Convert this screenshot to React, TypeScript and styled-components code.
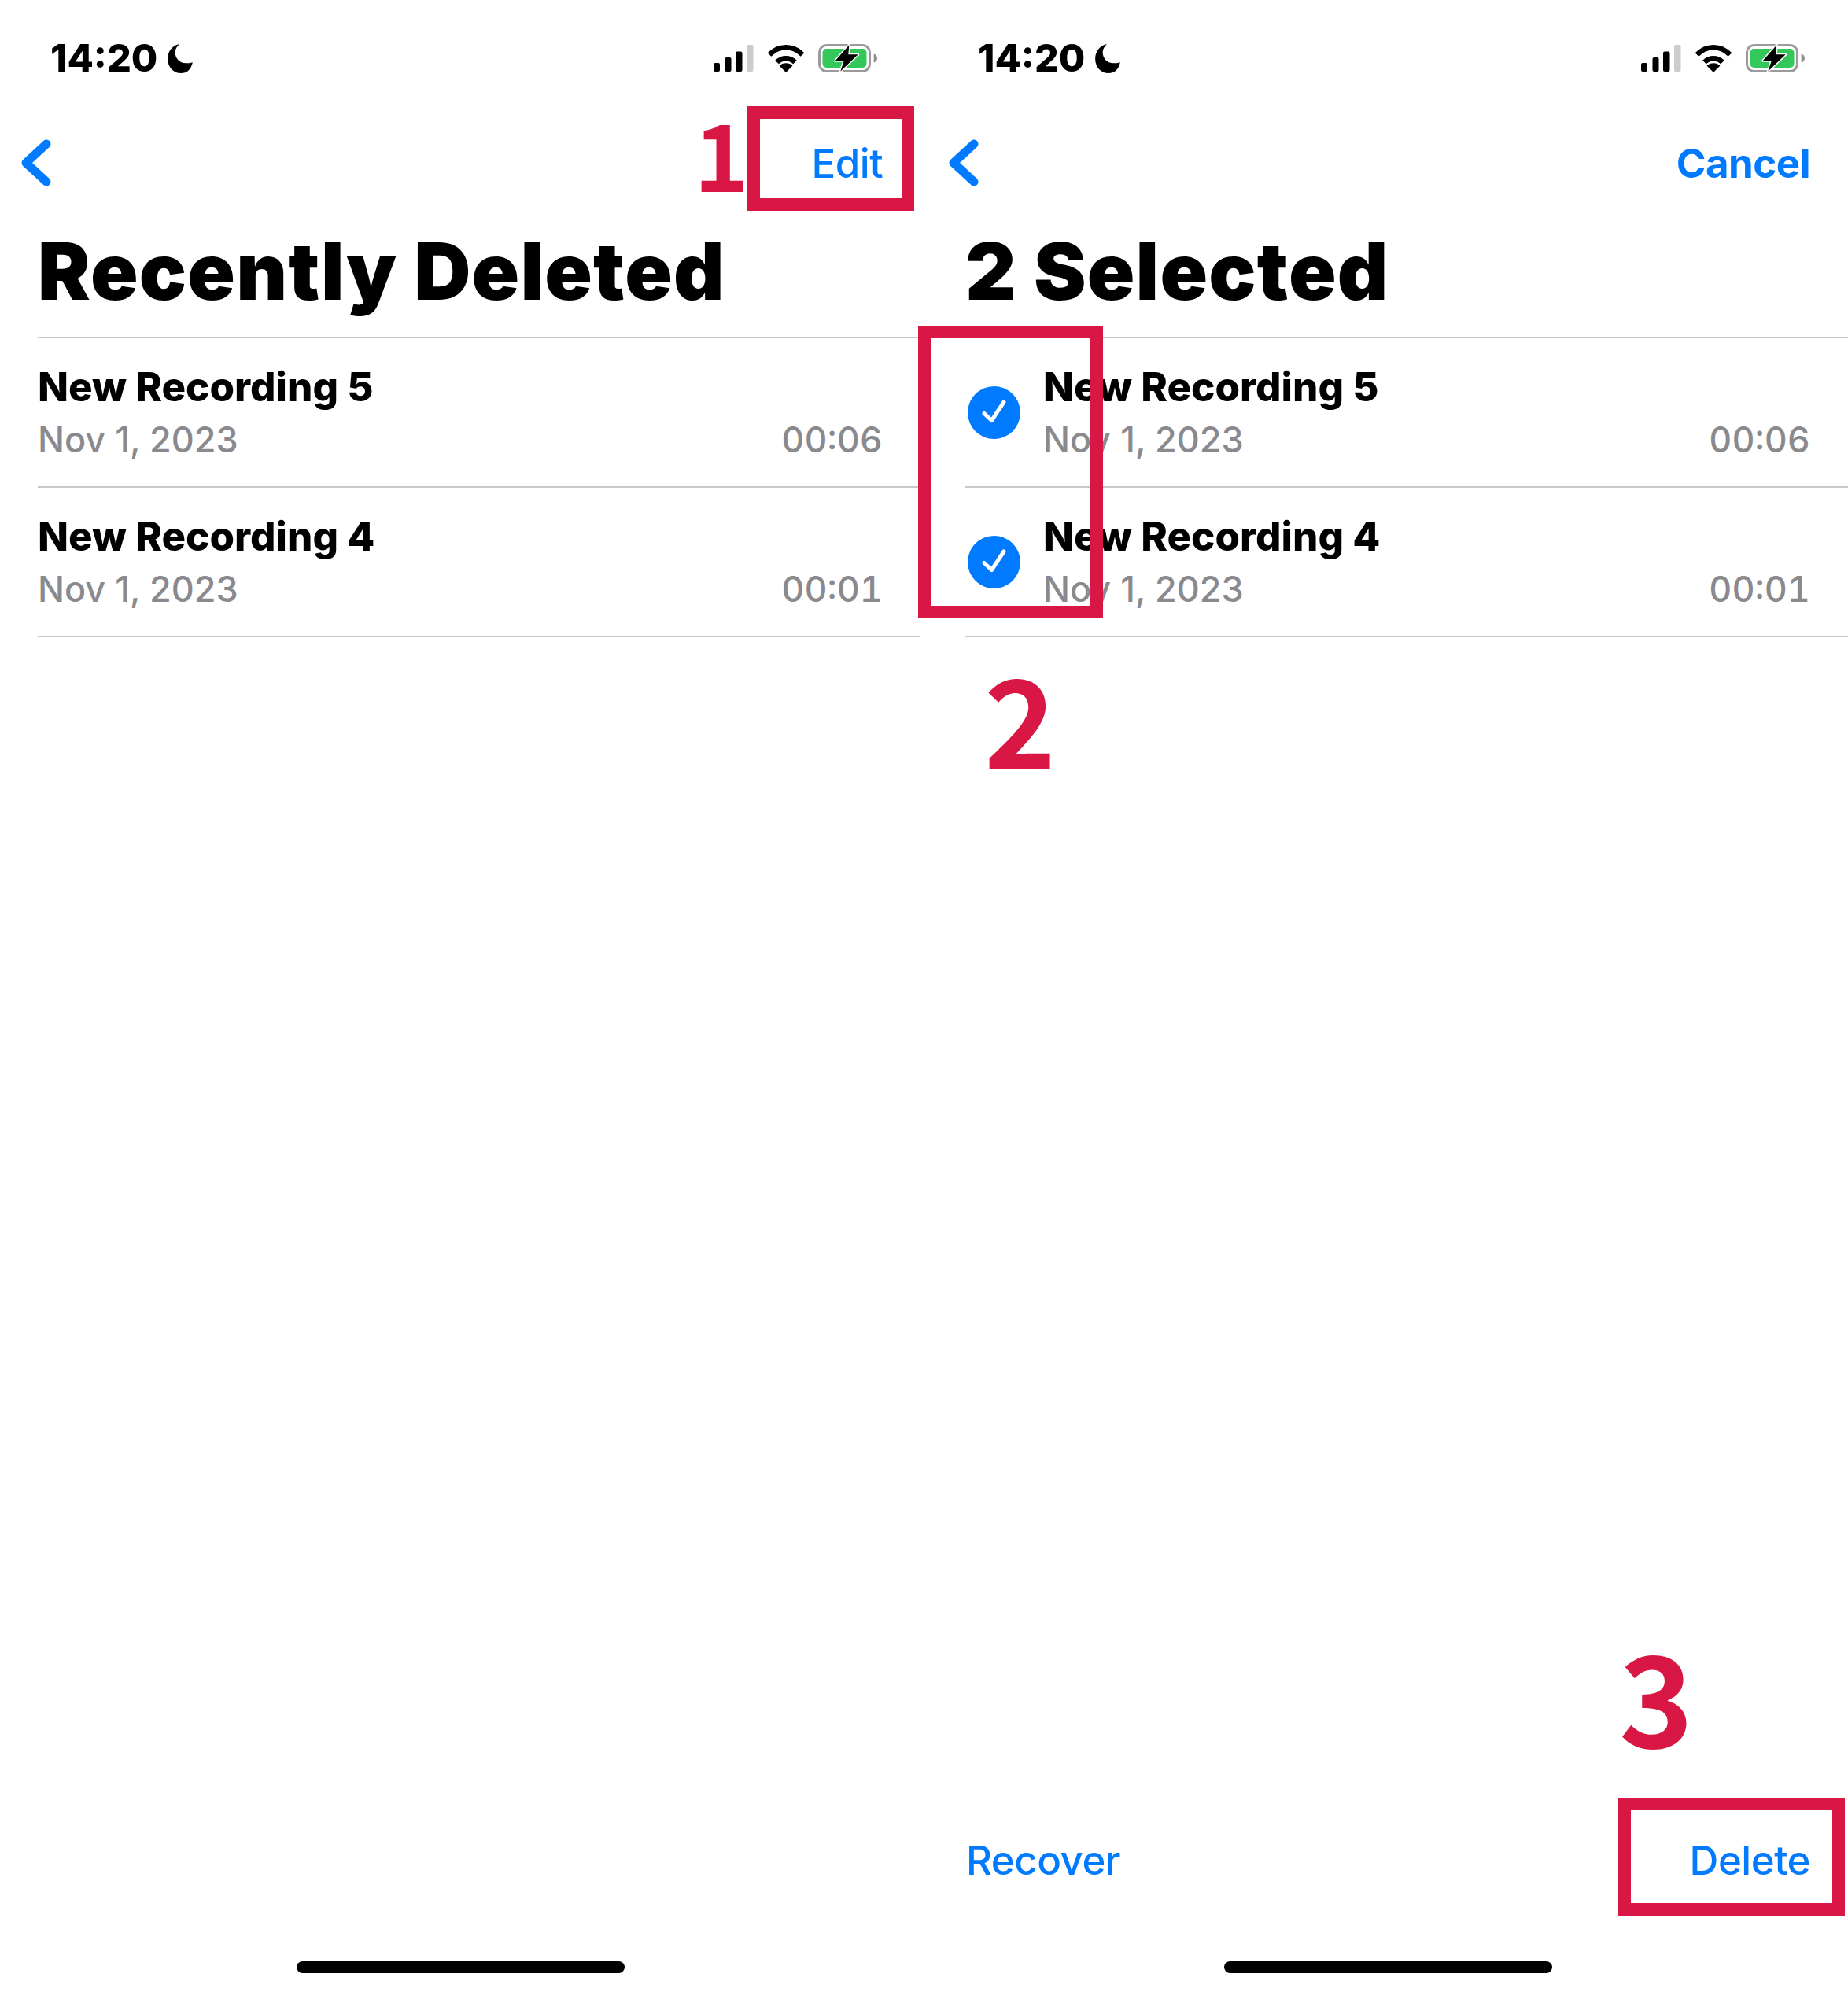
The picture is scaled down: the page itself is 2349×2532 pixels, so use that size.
import React from "react";
import styled, { createGlobalStyle } from "styled-components";

const Global = createGlobalStyle`
  html, body { margin: 0; padding: 0; background: #fff; }
  body { font-family: Inter, "Liberation Sans", sans-serif; color: #000; }
`;

const Page = styled.div`
  position: relative;
  display: flex;
  gap: 9px;
  width: 2349px;
  height: 2532px;
  overflow: hidden;
  background: #fff;
`;

const Screen = styled.section`
  flex: 0 0 1170px;
  display: flex;
  flex-direction: column;
  height: 2532px;
`;

const StatusBar = styled.div`
  flex: 0 0 148px;
  display: flex;
  align-items: center;
  justify-content: space-between;
  padding: 0 55px 0 64px;
  box-sizing: border-box;
`;

const TimeGroup = styled.div`
  display: flex;
  align-items: center;
  gap: 11px;
`;

const Time = styled.span`
  font-size: 48.5px;
  font-weight: 800;
  line-height: 1;
`;

const StatusIcons = styled.div`
  display: flex;
  align-items: center;
  gap: 17px;
`;

const NavBar = styled.div`
  flex: 0 0 118px;
  display: flex;
  align-items: center;
  justify-content: space-between;
  padding: 0 48px 0 27px;
  box-sizing: border-box;
`;

const NavAction = styled.span<{ $bold?: boolean }>`
  font-size: 51px;
  line-height: 1;
  letter-spacing: -0.5px;
  font-weight: ${(p) => (p.$bold ? 700 : 500)};
  color: #007aff;
`;

const Title = styled.h1`
  margin: 0 0 4px;
  height: 158px;
  line-height: 158px;
  padding-left: 48px;
  font-size: 100px;
  font-weight: 900;
  letter-spacing: 1.2px;
  white-space: nowrap;
`;

const List = styled.div`
  margin-left: 48px;
  border-top: 2px solid #c8c8ca;
`;

const Row = styled.div`
  box-sizing: border-box;
  height: 190px;
  padding-right: 48px;
  border-bottom: 2px solid #c8c8ca;
  display: flex;
  align-items: center;
  gap: 29px;
`;

const CheckMark = styled.div`
  flex: 0 0 67px;
  height: 67px;
  margin-left: 3px;
  border-radius: 50%;
  background: #007aff;
  display: flex;
  align-items: center;
  justify-content: center;
`;

const RowBody = styled.div`
  flex: 1;
  min-width: 0;
  margin-top: 3px;
`;

const RowTitle = styled.div`
  font-size: 51px;
  font-weight: 800;
  line-height: 60px;
`;

const RowMeta = styled.div`
  margin-top: 7px;
  display: flex;
  justify-content: space-between;
  font-size: 45px;
  line-height: 60px;
  font-weight: 500;
  color: #8a8a8e;
`;

const Duration = styled.span`
  font-variant-numeric: tabular-nums;
`;

const Toolbar = styled.div`
  margin-top: auto;
  height: 140px;
  padding: 0 48px 0 49px;
  box-sizing: border-box;
  display: flex;
  align-items: center;
  justify-content: space-between;
`;

const HomeZone = styled.div<{ $pushed?: boolean }>`
  flex: 0 0 98px;
  margin-top: ${(p) => (p.$pushed ? "auto" : "0")};
  box-sizing: border-box;
  padding-top: 59px;
  display: flex;
  justify-content: center;
`;

const HomeBar = styled.div`
  width: 417px;
  height: 15px;
  border-radius: 8px;
  background: #000;
`;

const Highlight = styled.div<{ $x: number; $y: number; $w: number; $h: number }>`
  position: absolute;
  left: ${(p) => p.$x}px;
  top: ${(p) => p.$y}px;
  width: ${(p) => p.$w}px;
  height: ${(p) => p.$h}px;
  box-sizing: border-box;
  border: 16px solid #d81745;
`;

const StepNumber = styled.span<{ $x: number; $y: number; $size: number }>`
  position: absolute;
  left: ${(p) => p.$x}px;
  top: ${(p) => p.$y}px;
  font-family: "Noto Sans CJK JP", "Noto Sans", sans-serif;
  font-weight: 700;
  font-size: ${(p) => p.$size}px;
  line-height: 1;
  color: #d81745;
`;

const Moon = () => (
  <svg width="36" height="37" viewBox="0 0 30 35">
    <path d="M14 0C5 2 0 9 0 18c0 10 7 17 16 17 7 0 12-4 14-13-3 1-5 1-8 1-8 0-13-6-13-13 0-4 2-7 5-10Z" fill="#000" />
  </svg>
);

const Signal = () => (
  <svg width="51" height="34" viewBox="0 0 51 34">
    <rect x="0" y="23" width="8" height="11" rx="2" fill="#000" />
    <rect x="14.5" y="16" width="8" height="18" rx="2" fill="#000" />
    <rect x="28" y="8.5" width="8.5" height="25.5" rx="2" fill="#000" />
    <rect x="42" y="0" width="8.5" height="34" rx="2" fill="#ccc" />
  </svg>
);

const Wifi = () => (
  <svg width="48" height="37" viewBox="0 0 48 37">
    <path d="M3 13.5C15 1 33 1 45 13.5" fill="none" stroke="#000" strokeWidth="6.5" />
    <path d="M12.5 23C19 16.5 29 16.5 35.5 23" fill="none" stroke="#000" strokeWidth="6.5" />
    <path d="M24 36 15.5 27.5C20 23 28 23 32.5 27.5Z" fill="#000" />
  </svg>
);

const Battery = () => (
  <svg width="75" height="37" viewBox="0 0 75 37">
    <rect x="1.5" y="1.5" width="64" height="33" rx="9" fill="none" stroke="#9b9b9b" strokeWidth="3" />
    <rect x="5.5" y="6" width="56" height="24" rx="5" fill="#34c759" />
    <path d="M70.7 12.5c2.5.6 4.3 3 4.3 5.500s-1.800 5-4.300 5.500Z" fill="#8e8e8e" />
    <path
      d="M39.300 1.300 21.700 21.300H32.700L28.300 34.700 50.700 13.300H38.300Z"
      fill="#000"
      stroke="#fff"
      strokeWidth="3"
      strokeLinejoin="round"
      paintOrder="stroke"
    />
  </svg>
);

const Status = () => (
  <StatusBar>
    <TimeGroup>
      <Time>14:20</Time>
      <Moon />
    </TimeGroup>
    <StatusIcons>
      <Signal />
      <Wifi />
      <Battery />
    </StatusIcons>
  </StatusBar>
);

const Back = () => (
  <svg width="38" height="60" viewBox="0 0 38 60">
    <path d="M32 6 6 30l26 24" fill="none" stroke="#007aff" strokeWidth="11" strokeLinecap="round" strokeLinejoin="round" />
  </svg>
);

const Tick = () => (
  <svg width="34" height="34" viewBox="0 0 34 34">
    <path d="M4 18.500 13.500 27.500 29 4" fill="none" stroke="#fff" strokeWidth="5" strokeLinecap="round" strokeLinejoin="round" />
  </svg>
);

const recordings = [
  { name: "New Recording 5", date: "Nov 1, 2023", length: "00:06" },
  { name: "New Recording 4", date: "Nov 1, 2023", length: "00:01" },
];

const Recordings = ({ selecting }: { selecting?: boolean }) => (
  <List>
    {recordings.map((r) => (
      <Row key={r.name}>
        {selecting && (
          <CheckMark>
            <Tick />
          </CheckMark>
        )}
        <RowBody>
          <RowTitle>{r.name}</RowTitle>
          <RowMeta>
            <span>{r.date}</span>
            <Duration>{r.length}</Duration>
          </RowMeta>
        </RowBody>
      </Row>
    ))}
  </List>
);

export default function App() {
  return (
    <Page>
      <Global />
      <Screen>
        <Status />
        <NavBar>
          <Back />
          <NavAction>Edit</NavAction>
        </NavBar>
        <Title>Recently Deleted</Title>
        <Recordings />
        <HomeZone $pushed>
          <HomeBar />
        </HomeZone>
      </Screen>
      <Screen>
        <Status />
        <NavBar>
          <Back />
          <NavAction $bold>Cancel</NavAction>
        </NavBar>
        <Title>2 Selected</Title>
        <Recordings selecting />
        <Toolbar>
          <NavAction>Recover</NavAction>
          <NavAction>Delete</NavAction>
        </Toolbar>
        <HomeZone>
          <HomeBar />
        </HomeZone>
      </Screen>
      <Highlight $x={950} $y={135} $w={212} $h={133} />
      <Highlight $x={1167} $y={414} $w={235} $h={372} />
      <Highlight $x={2057} $y={2285} $w={288} $h={150} />
      <StepNumber $x={882} $y={134} $size={118}>1</StepNumber>
      <StepNumber $x={1251} $y={832} $size={155}>2</StepNumber>
      <StepNumber $x={2058} $y={2072} $size={160}>3</StepNumber>
    </Page>
  );
}
